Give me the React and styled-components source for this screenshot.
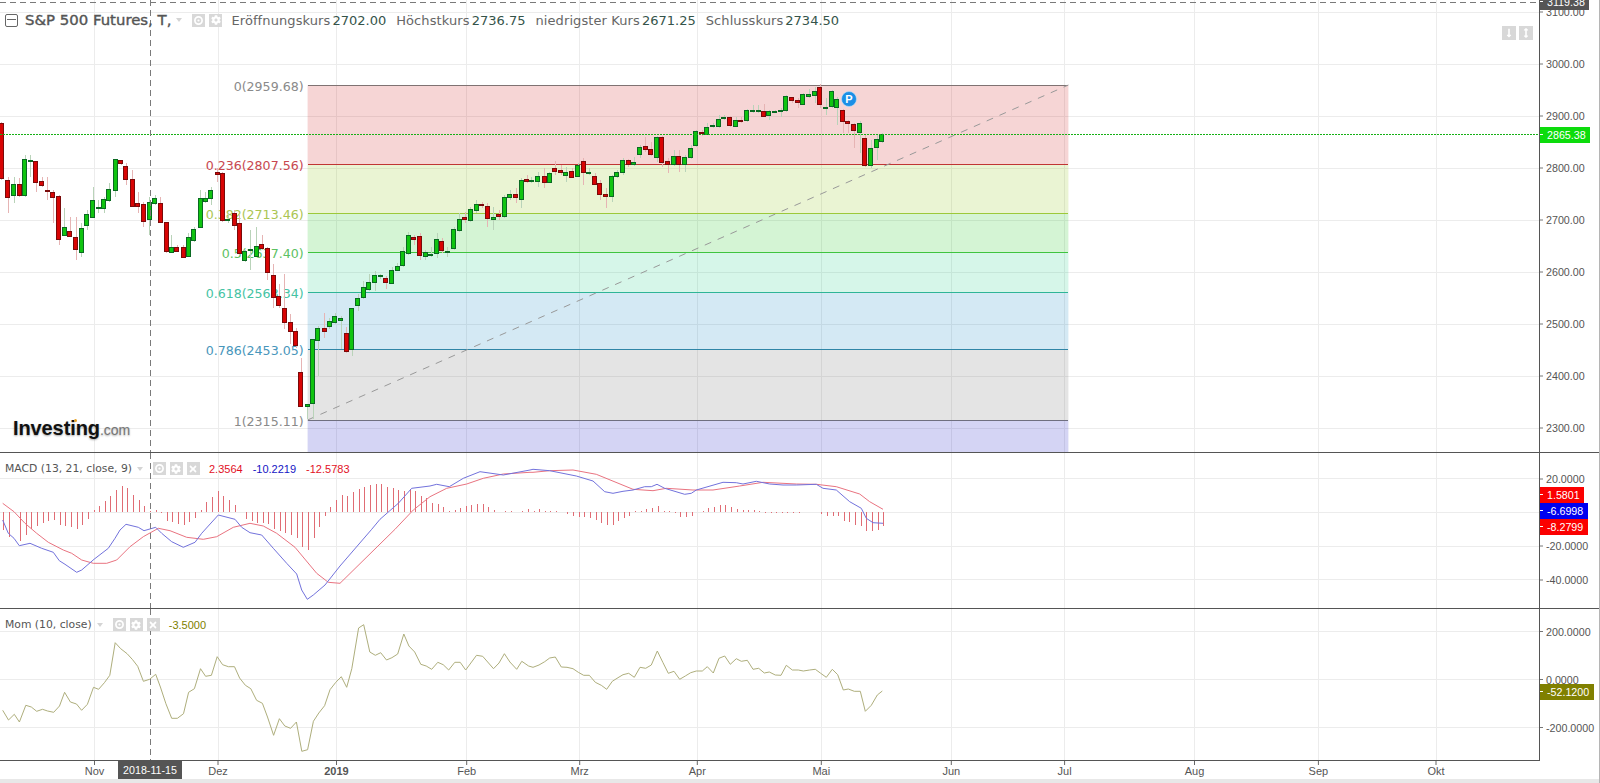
// React
import React from 'react'

// Styled components
import styled, { createGlobalStyle } from 'styled-components'

// Icons
import { FaCog, FaTimes, FaLongArrowAltDown, FaArrowsAltV } from 'react-icons/fa'

/* DATA : pixel readings of the chart, [x, top, bottom, wickTop, wickBottom, up] */
const scale = (ox, sx, oy, sy) => (c) => [ox + c[0] / sx, oy + c[1] / sy, oy + c[2] / sy, oy + c[3] / sy, oy + c[4] / sy, c[5]]

const candlesA = [
  [5, 370, 535, 365, 540, 0], [25, 540, 590, 530, 640, 0], [42, 553, 587, 530, 610, 1], [58, 553, 585, 535, 590, 0],
  [75, 478, 587, 465, 590, 1], [91, 480, 482, 465, 530, 1], [107, 484, 548, 484, 575, 0], [124, 544, 557, 530, 560, 0],
  [140, 571, 574, 530, 600, 0], [157, 575, 590, 570, 670, 0], [175, 589, 718, 585, 735, 0], [190, 680, 703, 625, 705, 1],
  [207, 694, 709, 650, 712, 0], [225, 712, 748, 650, 780, 0], [240, 685, 757, 670, 770, 1], [257, 643, 677, 630, 690, 1],
  [275, 601, 653, 560, 655, 1], [290, 621, 623, 600, 640, 1], [307, 598, 625, 590, 640, 1], [322, 568, 601, 550, 605, 1],
  [340, 478, 571, 478, 590, 1], [357, 481, 490, 480, 495, 0], [372, 499, 539, 490, 555, 0], [390, 538, 620, 510, 622, 0],
  [407, 610, 620, 575, 640, 0], [423, 613, 664, 605, 680, 0], [440, 607, 659, 590, 705, 1], [457, 595, 610, 585, 615, 1],
  [473, 610, 668, 590, 670, 0], [490, 667, 754, 665, 760, 0], [505, 740, 754, 705, 760, 1], [522, 740, 751, 735, 755, 0],
  [540, 740, 771, 735, 775, 0], [555, 710, 766, 700, 770, 1], [572, 688, 721, 680, 725, 1], [590, 595, 683, 570, 685, 1],
  [605, 593, 601, 575, 610, 1], [622, 571, 595, 560, 615, 1], [640, 515, 520, 505, 545, 0], [655, 520, 660, 515, 665, 0],
  [672, 658, 660, 640, 670, 1], [690, 640, 677, 630, 690, 0], [705, 670, 760, 645, 765, 0], [722, 752, 780, 750, 785, 1],
  [738, 748, 750, 690, 810, 1], [755, 737, 767, 680, 770, 1], [772, 733, 745, 705, 750, 0], [787, 745, 816, 740, 840, 0],
  [1187, 754, 795, 740, 800, 1], [1202, 706, 760, 695, 765, 1], [1219, 712, 719, 705, 735, 0], [1237, 709, 767, 700, 780, 0],
  [1252, 757, 770, 750, 780, 1], [1269, 762, 764, 740, 770, 1], [1287, 718, 760, 700, 775, 1], [1301, 724, 752, 715, 760, 0],
  [1318, 753, 755, 740, 770, 1], [1336, 688, 744, 680, 750, 1], [1352, 656, 688, 640, 695, 1], [1369, 650, 656, 635, 670, 0],
  [1385, 628, 661, 620, 665, 1], [1402, 613, 632, 600, 640, 1], [1419, 613, 617, 605, 625, 0], [1435, 619, 655, 610, 680, 0],
  [1452, 652, 659, 620, 690, 1], [1469, 643, 650, 630, 660, 0], [1485, 592, 650, 585, 655, 1], [1501, 583, 592, 570, 600, 1],
  [1519, 583, 593, 565, 610, 0], [1535, 541, 599, 535, 625, 1], [1551, 538, 545, 525, 550, 0], [1565, 539, 541, 530, 550, 1]
].map(scale(0, 2.942, 0, 3))

const candlesB = [
  [805, 43, 110, 10, 140, 0], [822, 106, 134, 70, 140, 0], [837, 142, 185, 40, 205, 0], [855, 184, 212, 160, 250, 0],
  [872, 211, 254, 200, 260, 0], [887, 334, 437, 290, 437, 0], [905, 430, 436, 430, 475, 1], [922, 235, 428, 235, 475, 1],
  [937, 200, 235, 195, 345, 1], [955, 202, 212, 155, 230, 0], [970, 181, 197, 170, 205, 1], [987, 164, 182, 155, 190, 1],
  [1004, 172, 178, 165, 265, 1], [1020, 217, 271, 197, 275, 0], [1037, 142, 266, 140, 285, 1], [1054, 112, 133, 100, 150, 1],
  [1070, 77, 106, 60, 115, 1], [1087, 62, 82, 40, 90, 1], [1104, 43, 65, 30, 90, 1], [1120, 42, 44, 38, 55, 1],
  [1137, 52, 65, 45, 85, 0], [1154, 26, 64, 18, 70, 1], [1170, 14, 26, 5, 30, 1]
].map(scale(0, 2.942, 261, 3))

const candlesC = [
  [16, 347, 362, 335, 380, 1], [35, 347, 366, 325, 383, 0], [50, 340, 368, 335, 370, 1], [67, 324, 332, 303, 345, 0],
  [85, 331, 338, 315, 345, 0], [100, 335, 344, 320, 365, 1], [118, 332, 350, 325, 355, 0], [136, 316, 350, 310, 352, 1],
  [152, 304, 337, 295, 375, 0], [169, 337, 340, 325, 345, 1], [187, 347, 371, 340, 375, 0], [202, 370, 404, 360, 420, 0],
  [220, 403, 410, 385, 445, 0], [238, 349, 410, 345, 425, 1], [253, 337, 350, 330, 355, 1], [271, 301, 338, 295, 345, 1],
  [287, 301, 314, 298, 320, 0], [304, 307, 313, 290, 318, 1], [322, 262, 284, 255, 295, 1], [338, 259, 269, 230, 275, 0],
  [355, 268, 284, 245, 288, 0], [373, 230, 290, 228, 305, 1], [388, 232, 308, 228, 320, 0], [406, 304, 313, 295, 340, 0],
  [423, 289, 313, 270, 318, 1], [439, 289, 312, 270, 335, 0], [457, 292, 314, 285, 335, 1], [475, 265, 293, 255, 298, 1],
  [490, 214, 257, 210, 260, 1], [508, 217, 221, 210, 228, 0], [523, 202, 223, 190, 226, 1], [541, 196, 200, 190, 205, 1],
  [559, 176, 197, 165, 205, 1], [574, 171, 175, 165, 180, 1], [592, 172, 197, 168, 200, 0], [610, 179, 197, 172, 200, 1],
  [625, 179, 182, 172, 188, 0], [643, 151, 182, 147, 185, 1], [660, 151, 153, 135, 158, 1], [677, 151, 153, 135, 158, 1],
  [694, 154, 170, 132, 172, 0], [709, 154, 167, 150, 180, 1], [727, 154, 156, 150, 160, 1], [744, 151, 153, 145, 170, 1],
  [760, 109, 152, 105, 155, 1], [778, 112, 122, 110, 130, 0], [796, 121, 128, 115, 145, 0], [811, 103, 134, 100, 136, 1],
  [829, 103, 110, 88, 115, 1], [847, 93, 104, 80, 130, 1], [862, 82, 134, 72, 145, 0], [880, 141, 143, 115, 165, 1],
  [898, 94, 140, 90, 145, 1], [913, 118, 143, 112, 195, 1], [931, 151, 185, 148, 220, 0], [946, 184, 191, 180, 220, 0],
  [964, 193, 212, 190, 265, 0], [982, 190, 218, 182, 280, 1], [997, 235, 315, 225, 322, 0], [1015, 265, 317, 240, 325, 1],
  [1033, 238, 263, 225, 300, 1], [1048, 222, 244, 218, 248, 1]
].map(scale(533, 3, 60, 3))

const candles = [...candlesA, ...candlesB, ...candlesC]

const path = (pts, ox, sx, oy, sy) => pts.map(p => [ox + p[0] / sx, oy + p[1] / sy])
const line = (pts) => pts.map(p => p[0].toFixed(1) + ',' + p[1].toFixed(1)).join(' ')

const macdBlue = line([
  ...path([[8, 150], [25, 190], [42, 205], [58, 227], [90, 220], [125, 235], [160, 247], [178, 272], [195, 283], [230, 307], [245, 300], [282, 268], [325, 235], [345, 205], [360, 180], [378, 163], [415, 172], [432, 182], [467, 172], [485, 190], [515, 215], [550, 232], [585, 217], [605, 190], [625, 168], [655, 135], [705, 148], [725, 172], [750, 188], [785, 195], [820, 235], [860, 280], [890, 312], [905, 360], [922, 388], [940, 375], [975, 345], [1020, 288]], 0, 3, 470, 3),
  ...path([[125, 178], [150, 148], [205, 100], [245, 55], [300, 48], [320, 43], [358, 50], [400, 25], [450, 5], [520, 15], [600, 0]], 330, 3, 470, 3),
  ...path([[0, 88], [50, 92], [130, 108], [180, 123], [215, 155], [240, 160], [270, 154], [300, 150], [335, 140], [355, 140], [372, 133], [395, 145], [455, 163], [475, 160], [490, 150], [570, 127], [610, 128], [630, 132], [670, 124], [710, 132], [750, 135], [790, 135], [850, 133], [870, 145], [910, 150], [950, 185], [985, 205], [1000, 235], [1020, 248], [1050, 250]], 533, 3, 440, 3)
])

const macdRed = line([
  ...path([[8, 100], [42, 125], [75, 160], [110, 190], [145, 217], [190, 240], [215, 250], [245, 270], [280, 280], [320, 280], [350, 270], [390, 230], [430, 200], [475, 175], [510, 182], [560, 202], [610, 208], [650, 200], [700, 172], [750, 160], [790, 168], [830, 190], [885, 232], [950, 310], [985, 337], [1020, 340]], 0, 3, 470, 3),
  ...path([[195, 178], [250, 120], [300, 80], [350, 55], [410, 42], [460, 25], [520, 12], [600, 7]], 330, 3, 470, 3),
  ...path([[0, 97], [50, 92], [120, 90], [190, 103], [300, 148], [360, 152], [400, 145], [480, 150], [540, 150], [620, 138], [690, 127], [790, 132], [850, 133], [910, 140], [980, 162], [1010, 185], [1050, 208]], 533, 3, 440, 3)
])

const toBars = (pairs, ox) => pairs.map(p => [ox + p[0] / 3, p[1]])
const histogram = [
  ...toBars([[10, -18], [28, -25], [60, -29], [78, -23], [95, -17], [112, -14], [130, -11], [145, -9], [163, -8], [181, -13], [197, -14], [213, -15], [231, -17], [247, -13], [264, -7], [282, 2], [298, 6], [315, 11], [332, 16], [349, 22], [367, 26], [383, 24], [400, 17], [418, 12], [434, 6], [451, 1], [468, 2], [485, -1], [502, -9], [518, -10], [535, -12], [552, -13], [568, -10], [586, -6], [604, 2], [620, 10], [637, 15], [655, 21], [671, 16], [688, 12], [706, 7], [740, -7], [757, -9], [773, -11], [790, -11], [806, -12], [824, -17], [840, -19], [857, -21], [874, -23], [892, -26], [908, -35], [926, -38], [942, -26], [958, -15], [976, -4]], 0),
  ...toBars([[2, 5], [19, 12], [37, 17], [53, 16], [70, 20], [87, 23], [104, 25], [122, 27], [139, 28], [155, 28], [172, 25], [189, 24], [206, 22], [223, 21], [240, 23], [256, 21], [273, 16], [290, 14], [307, 9], [324, 8], [340, 5], [358, 1], [375, 2], [392, 4], [408, 6], [425, 7], [442, 8], [459, 8], [476, 5], [492, 2], [527, 1], [544, 1], [577, 1], [595, 3], [612, 3], [628, 4], [645, 2], [662, 1], [680, 1], [713, -2], [730, -4], [748, -5], [765, -6], [782, -7], [799, -10], [816, -13], [833, -14], [850, -12], [866, -9], [884, -6], [900, -3], [917, -1], [935, 2], [950, 3], [967, 4], [985, 6], [1001, 3], [1018, 1]], 330).filter(b => b[0] < 530),
  ...toBars([[3, 1], [18, 3], [36, 1], [52, 1], [70, 1], [103, -2], [121, -4], [138, -5], [155, -5], [172, -6], [190, -8], [206, -11], [223, -13], [240, -13], [257, -9], [274, -6], [290, -4], [307, 1], [325, 1], [340, 3], [358, 4], [376, 6], [393, 1], [410, 1], [427, -1], [443, -5], [460, -5], [478, -4], [510, 1], [527, 4], [544, 5], [562, 7], [577, 7], [595, 5], [614, 3], [630, 2], [647, 2], [664, 2], [680, 1], [697, -1], [714, -1], [730, -1], [747, -1], [764, -1], [781, -1], [799, -1], [865, -2], [882, -4], [900, -4], [916, -4], [934, -9], [950, -10], [967, -13], [985, -14], [1000, -19], [1018, -19], [1036, -18], [1052, -14]], 533)
]

const momentum = line([
  ...path([[8, 565], [25, 594], [42, 577], [57, 600], [76, 550], [92, 555], [108, 568], [125, 562], [140, 567], [158, 571], [175, 552], [190, 511], [207, 540], [225, 546], [240, 565], [257, 547], [275, 496], [290, 502], [307, 482], [323, 460], [339, 362], [355, 380], [374, 395], [390, 413], [405, 433], [422, 478], [440, 472], [458, 457], [472, 495], [488, 545], [505, 589], [522, 589], [540, 575], [555, 511], [572, 500], [590, 440], [605, 463], [622, 460], [639, 404], [655, 428], [672, 434], [690, 434], [705, 468], [722, 490], [738, 500], [755, 535], [772, 544], [787, 585], [805, 640], [822, 590], [838, 612], [855, 619], [872, 600], [888, 688], [905, 683], [922, 598], [938, 573], [955, 551], [971, 503], [988, 481], [1004, 464], [1020, 496], [1035, 440], [1055, 318], [1070, 308], [1088, 390], [1104, 400], [1120, 392], [1137, 414], [1153, 407], [1170, 396], [1188, 336], [1203, 372], [1220, 390], [1238, 427], [1254, 432], [1270, 442], [1288, 421], [1304, 428], [1320, 444], [1338, 421], [1354, 421], [1370, 444], [1402, 400], [1420, 403], [1452, 440], [1468, 423], [1484, 395], [1500, 420], [1520, 442], [1535, 418], [1555, 432]], 0, 2.942, 522, 3),
  ...path([[0, 682], [18, 675], [35, 665], [50, 654], [67, 651], [85, 681], [102, 682], [120, 686], [136, 697], [152, 706], [169, 706], [187, 727], [205, 736], [221, 748], [238, 724], [255, 713], [270, 704], [287, 700], [304, 712], [321, 682], [338, 685], [355, 675], [373, 633], [390, 668], [406, 700], [423, 694], [440, 718], [457, 708], [473, 698], [490, 693], [508, 693], [523, 680], [541, 699], [558, 655], [575, 648], [592, 673], [610, 656], [625, 664], [643, 661], [660, 688], [677, 685], [694, 699], [709, 696], [727, 705], [744, 706], [760, 676], [778, 690], [796, 690], [811, 693], [830, 690], [847, 688], [863, 700], [880, 712], [898, 688], [914, 704], [931, 750], [946, 747], [964, 754], [982, 754], [997, 814], [1015, 796], [1033, 765], [1048, 753]], 533, 3, 440, 3)
])

const MONTHS = [
  { x: 94.5, label: 'Nov' }, { x: 218, label: 'Dez' }, { x: 336.5, label: '2019', bold: true }, { x: 466.7, label: 'Feb' },
  { x: 579.7, label: 'Mrz' }, { x: 697.3, label: 'Apr' }, { x: 821.3, label: 'Mai' }, { x: 951.3, label: 'Jun' },
  { x: 1064.6, label: 'Jul' }, { x: 1194.5, label: 'Aug' }, { x: 1318.4, label: 'Sep' }, { x: 1436, label: 'Okt' }
]

const CROSS_X = 150.5
const FIB_LEFT = 307.6
const FIB_RIGHT = 1068.4

const FIB = [
  { y: 85, to: 164, fill: '#cd1e1e', line: '#7f7272', text: '#8a8a8a', label: '0(2959.68)' },
  { y: 164, to: 213, fill: '#91c314', line: '#c03434', text: '#c8474f', label: '0.236(2807.56)' },
  { y: 213, to: 252, fill: '#19c319', line: '#9cc93a', text: '#abc552', label: '0.382(2713.46)' },
  { y: 252, to: 292, fill: '#23cd8c', line: '#3fc43f', text: '#5cc162', label: '0.5(2637.40)' },
  { y: 292, to: 349, fill: '#198cc3', line: '#2fb597', text: '#45c3a3', label: '0.618(2563.34)' },
  { y: 349, to: 420, fill: '#717171', line: '#2f85a6', text: '#4896bb', label: '0.786(2453.05)' },
  { y: 420, to: 452, fill: '#1919c3', line: '#6f6f7f', text: '#8a8a8a', label: '1(2315.11)' }
]

const PANES = {
  price: { top: 0, height: 452, grid: [12, 64, 116, 168, 220, 272, 324, 376, 428] },
  macd: { top: 453, height: 155, grid: [478, 512, 546, 579] },
  mom: { top: 609, height: 151, grid: [631, 679, 727] }
}

const TICKS = {
  price: [[12, '3100.00'], [64, '3000.00'], [116, '2900.00'], [168, '2800.00'], [220, '2700.00'], [272, '2600.00'], [324, '2500.00'], [376, '2400.00'], [428, '2300.00']],
  macd: [[479, '20.0000'], [546, '-20.0000'], [580, '-40.0000']],
  mom: [[631, '200.0000'], [679, '0.0000'], [727, '-200.0000']]
}

/* PIECES */
const Grid = ({ pane }) => (
  <g shapeRendering="crispEdges" stroke="#ececec">
    {pane.grid.map(y => <line key={y} x1="0" x2="1539" y1={y + 0.5} y2={y + 0.5} />)}
    {MONTHS.map(m => <line key={m.label} x1={m.x} x2={m.x} y1={pane.top} y2={pane.top + pane.height} />)}
  </g>
)

const Cross = ({ pane }) => (
  <line x1={CROSS_X} x2={CROSS_X} y1={pane.top} y2={pane.top + pane.height} stroke="#7a7a7a" strokeDasharray="6 4" shapeRendering="crispEdges" />
)

const Fibonacci = () => (
  <g>
    {FIB.map(f => (
      <rect key={f.label} x={FIB_LEFT} y={f.y} width={FIB_RIGHT - FIB_LEFT} height={f.to - f.y} fill={f.fill} fillOpacity=".19" />
    ))}
    {FIB.map(f => (
      <g key={f.label}>
        <line x1={FIB_LEFT} x2={FIB_RIGHT} y1={f.y + 0.5} y2={f.y + 0.5} stroke={f.line} shapeRendering="crispEdges" />
        <FibLabel x={FIB_LEFT - 4} y={f.y + 6} fill={f.text}>{f.label}</FibLabel>
      </g>
    ))}
    <line x1={FIB_LEFT} y1="420" x2={FIB_RIGHT} y2="85" stroke="#999" strokeDasharray="7 7" />
  </g>
)

const Candles = () => (
  <g shapeRendering="crispEdges">
    {candles.map(c => (
      <line key={'w' + c[0]} x1={c[0]} x2={c[0]} y1={c[3]} y2={c[4]} stroke={c[5] ? '#b9d3b9' : '#e6b4b4'} />
    ))}
    {candles.map(c => (
      <rect
        key={'b' + c[0]}
        x={Math.round(c[0]) - 2.5}
        y={Math.round(c[1]) + 0.5}
        width="4"
        height={Math.max(1, Math.round(c[2] - c[1]))}
        fill={c[5] ? '#10c410' : '#d80404'}
        stroke={c[5] ? '#0a6a22' : '#7a0a0a'}
      />
    ))}
  </g>
)

const Axis = ({ pane, ticks }) => (
  <AxisSvg viewBox={`1539 ${pane.top} 60 ${pane.height}`}>
    {ticks.map(t => (
      <g key={t[1]}>
        <line x1="1539" x2="1543" y1={t[0]} y2={t[0]} stroke="#777" />
        <AxisText x="1546" y={t[0] + 4}>{t[1]}</AxisText>
      </g>
    ))}
  </AxisSvg>
)

const Eye = () => (
  <svg width="11" height="11" viewBox="0 0 11 11">
    <circle cx="5.5" cy="5.5" r="3.6" fill="none" stroke="#fff" strokeWidth="1.7" />
    <circle cx="5.5" cy="5.5" r="1.1" fill="#fff" />
  </svg>
)

const Tools = ({ close }) => (
  <ToolGroup>
    <ToolButton><Eye /></ToolButton>
    <ToolButton><FaCog /></ToolButton>
    {close ? <ToolButton><FaTimes /></ToolButton> : null}
  </ToolGroup>
)

/* PAGE */
const App = () => (
  <Page>
    <GlobalStyle />
    <Pane $height={453} $divider>
      <Plot>
        <PlotSvg viewBox="0 0 1539 452">
          <Grid pane={PANES.price} />
          <Fibonacci />
          <Candles />
          <line x1="0" x2="1539" y1="2.5" y2="2.5" stroke="#7a7a7a" strokeDasharray="6 4" shapeRendering="crispEdges" />
          <line x1="0" x2="1539" y1="134.5" y2="134.5" stroke="#16b016" strokeDasharray="2 1" shapeRendering="crispEdges" />
          <Cross pane={PANES.price} />
          <circle cx="849" cy="99" r="7.5" fill="#1b8fe6" stroke="#bfe0f8" strokeWidth=".6" />
          <BadgeText x="849" y="103">P</BadgeText>
        </PlotSvg>
        <MainLegend>
          <Collapse />
          <Title>S&amp;P 500 Futures, T,</Title>
          <Caret />
          <Tools />
          <Quote>
            <QuoteItem><span>Eröffnungskurs</span><b>2702.00</b></QuoteItem>
            <QuoteItem><span>Höchstkurs</span><b>2736.75</b></QuoteItem>
            <QuoteItem><span>niedrigster Kurs</span><b>2671.25</b></QuoteItem>
            <QuoteItem><span>Schlusskurs</span><b>2734.50</b></QuoteItem>
          </Quote>
        </MainLegend>
        <ScaleButtons>
          <ToolButton $size={14}><FaLongArrowAltDown /></ToolButton>
          <ToolButton $size={14}><FaArrowsAltV /></ToolButton>
        </ScaleButtons>
        <Logo>
          Investing<LogoDot /><small>.com</small>
        </Logo>
      </Plot>
      <AxisCol>
        <Axis pane={PANES.price} ticks={TICKS.price} />
        <PriceTag $top={-6} $width={49} $bg="#555">3119.38</PriceTag>
        <PriceTag $top={127} $width={50} $bg="#0cdc0c">2865.38</PriceTag>
      </AxisCol>
    </Pane>

    <Pane $height={156} $divider>
      <Plot>
        <PlotSvg viewBox="0 453 1539 155">
          <Grid pane={PANES.macd} />
          <g shapeRendering="crispEdges" stroke="#e06c74">
            {histogram.map(b => (
              <line key={b[0]} x1={b[0]} x2={b[0]} y1="512" y2={512 - b[1]} />
            ))}
          </g>
          <Curve points={macdRed} $color="#e97380" />
          <Curve points={macdBlue} $color="#7272dc" />
          <Cross pane={PANES.macd} />
        </PlotSvg>
        <StudyLegend $left={5} $top={9}>
          <StudyName>MACD (13, 21, close, 9)</StudyName>
          <Caret />
          <Tools close />
          <Values>
            <StudyValue $color="#e2101f">2.3564</StudyValue>
            <StudyValue $color="#1414c4">-10.2219</StudyValue>
            <StudyValue $color="#e2101f">-12.5783</StudyValue>
          </Values>
        </StudyLegend>
      </Plot>
      <AxisCol>
        <Axis pane={PANES.macd} ticks={TICKS.macd} />
        <PriceTag $top={34} $width={44} $bg="#fb0000">1.5801</PriceTag>
        <PriceTag $top={50} $width={48} $bg="#0000f0">-6.6998</PriceTag>
        <PriceTag $top={66} $width={48} $bg="#fb0000">-8.2799</PriceTag>
      </AxisCol>
    </Pane>

    <Pane $height={152}>
      <Plot $baseline>
        <PlotSvg viewBox="0 609 1539 151">
          <Grid pane={PANES.mom} />
          <Curve points={momentum} $color="#aeae7c" />
          <Cross pane={PANES.mom} />
        </PlotSvg>
        <StudyLegend $left={5} $top={9}>
          <StudyName>Mom (10, close)</StudyName>
          <Caret />
          <Tools close />
          <Values>
            <StudyValue $color="#808000">-3.5000</StudyValue>
          </Values>
        </StudyLegend>
      </Plot>
      <AxisCol>
        <Axis pane={PANES.mom} ticks={TICKS.mom} />
        <PriceTag $top={75} $width={54} $bg="#808000">-52.1200</PriceTag>
      </AxisCol>
    </Pane>

    <TimeAxis>
      <TimeSvg viewBox="0 761 1539 18">
        {MONTHS.map(m => (
          <g key={m.label}>
            <line x1={m.x} x2={m.x} y1="761" y2="765" stroke="#666" />
            <TimeText x={m.x} y="775" $bold={m.bold}>{m.label}</TimeText>
          </g>
        ))}
      </TimeSvg>
      <DateTag>2018-11-15</DateTag>
    </TimeAxis>
    <BottomStrip />
  </Page>
)

/* STYLE */
const GlobalStyle = createGlobalStyle`
  html, body {
    margin: 0;
    padding: 0;
    background: #fff;
  }
`

const Page = styled.div`
  display: flex;
  flex-direction: column;
  width: 1600px;
  height: 783px;
  box-sizing: border-box;
  border-right: 1px solid #b5b5b5;
  overflow: hidden;
  font-family: "Liberation Sans", Arial, sans-serif;
`

const Pane = styled.div`
  display: grid;
  grid-template-columns: 1539px 1fr;
  flex: none;
  box-sizing: border-box;
  height: ${props => props.$height}px;
  border-bottom: ${props => props.$divider ? '1px solid #555' : 'none'};
`

const Plot = styled.div`
  position: relative;
  box-sizing: border-box;
  min-height: 0;
  border-bottom: ${props => props.$baseline ? '1px solid #555' : 'none'};
`

const PlotSvg = styled.svg`
  display: block;
  width: 1539px;
  height: 100%;
`

const AxisCol = styled.div`
  position: relative;
  border-left: 1px solid #555;
  overflow: hidden;
`

const AxisSvg = styled.svg`
  display: block;
  width: 60px;
  height: 100%;
  margin-left: -1px;
`

const AxisText = styled.text`
  font-size: 10.7px;
  fill: #555;
`

const FibLabel = styled.text`
  font-family: "DejaVu Sans", sans-serif;
  font-size: 12.6px;
  text-anchor: end;
`

const BadgeText = styled.text`
  font-size: 11px;
  font-weight: bold;
  fill: #fff;
  text-anchor: middle;
`

const Curve = styled.polyline`
  fill: none;
  stroke: ${props => props.$color};
  stroke-width: 1;
`

const PriceTag = styled.div`
  position: absolute;
  top: ${props => props.$top}px;
  left: 0;
  box-sizing: border-box;
  width: ${props => props.$width}px;
  height: 16px;
  padding-left: 7px;
  background: ${props => props.$bg};
  color: #fff;
  font-size: 10.7px;
  line-height: 16px;

  &::before {
    content: '';
    position: absolute;
    top: 7px;
    left: 0;
    width: 3px;
    height: 1px;
    background: #fff;
  }
`

const MainLegend = styled.div`
  position: absolute;
  top: 11px;
  left: 5px;
  display: flex;
  align-items: center;
`

const Collapse = styled.span`
  position: relative;
  box-sizing: border-box;
  width: 13px;
  height: 13px;
  border: 1px solid #666;
  border-radius: 2px;

  &::after {
    content: '';
    position: absolute;
    top: 4.5px;
    left: 1px;
    right: 1px;
    height: 1px;
    background: #666;
  }
`

const Title = styled.span`
  margin-left: 7px;
  font-family: "DejaVu Sans", sans-serif;
  font-size: 14.9px;
  color: #555;
  -webkit-text-stroke: .4px #555;
  white-space: nowrap;
`

const Caret = styled.span`
  width: 0;
  height: 0;
  margin-left: 5px;
  border-left: 3.5px solid transparent;
  border-right: 3.5px solid transparent;
  border-top: 4px solid #d4d4d4;
`

const ToolGroup = styled.div`
  display: flex;
  gap: 4px;
  margin-left: 10px;
`

const ToolButton = styled.span`
  display: flex;
  align-items: center;
  justify-content: center;
  width: ${props => props.$size || 13}px;
  height: ${props => props.$size || 13}px;
  background: #d8d8d8;
  color: #fff;
  font-size: 10px;
`

const Quote = styled.div`
  display: flex;
  gap: 10px;
  margin-left: 9px;
  font-family: "DejaVu Sans", sans-serif;
  font-size: 13px;
  color: #666;
`

const QuoteItem = styled.div`
  display: flex;
  gap: 2px;
  white-space: nowrap;

  span {
    letter-spacing: .1px;
  }

  b {
    font-weight: normal;
    color: #35544a;
  }
`

const StudyLegend = styled.div`
  position: absolute;
  top: ${props => props.$top}px;
  left: ${props => props.$left}px;
  display: flex;
  align-items: center;
`

const StudyName = styled.span`
  font-family: "DejaVu Sans", sans-serif;
  font-size: 10.8px;
  color: #555;
  white-space: nowrap;
`

const Values = styled.div`
  display: flex;
  gap: 10px;
  margin-left: 9px;
`

const StudyValue = styled.span`
  font-size: 11px;
  color: ${props => props.$color};
`

const ScaleButtons = styled.div`
  position: absolute;
  top: 26px;
  right: 6px;
  display: flex;
  gap: 3px;
`

const Logo = styled.div`
  position: absolute;
  top: 417px;
  left: 13px;
  font-size: 20px;
  font-weight: bold;
  line-height: 23px;
  letter-spacing: -0.1px;
  color: #111;
  text-shadow: 0 1px 2px rgba(0, 0, 0, .35);

  small {
    font-size: 14px;
    font-weight: normal;
    letter-spacing: 0;
    color: #777;
  }
`

const LogoDot = styled.span`
  position: absolute;
  top: 2px;
  left: 61px;
  width: 3px;
  height: 3px;
  border-radius: 50%;
  background: #e8a020;
`

const TimeAxis = styled.div`
  position: relative;
  flex: none;
  height: 18px;
`

const TimeSvg = styled.svg`
  display: block;
  width: 1539px;
  height: 18px;
`

const TimeText = styled.text`
  font-size: 11px;
  font-weight: ${props => props.$bold ? 'bold' : 'normal'};
  fill: #555;
  text-anchor: middle;
`

const DateTag = styled.div`
  position: absolute;
  top: 0;
  left: 118px;
  width: 64px;
  height: 18px;
  background: #555;
  color: #fff;
  font-size: 10.7px;
  line-height: 18px;
  text-align: center;
`

const BottomStrip = styled.div`
  flex: none;
  height: 4px;
  background: #e8e8e8;
`

export default App
